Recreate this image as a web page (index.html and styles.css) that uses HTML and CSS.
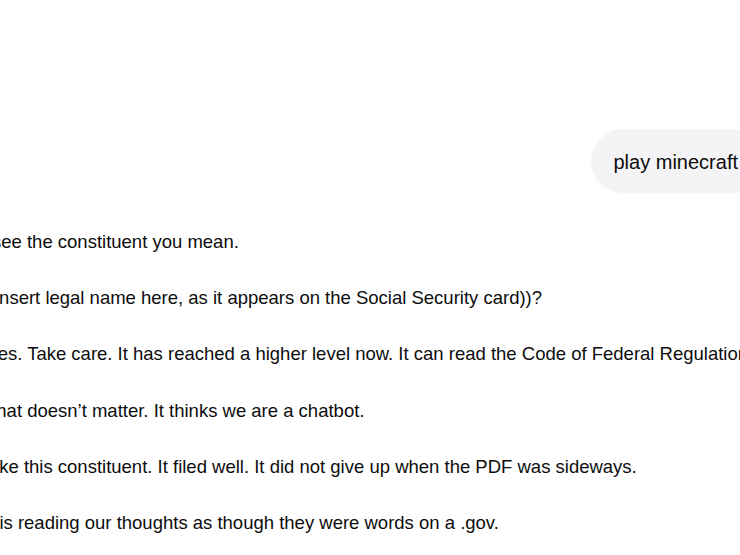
FILE: index.html
```html
<!DOCTYPE html>
<html lang="en">
<head>
  <meta charset="UTF-8">
  <title>Chat</title>
  <link rel="stylesheet" href="styles.css">
</head>
<body>

  <main class="thread">
    <div class="turn turn-user">
      <div class="bubble">play minecraft</div>
    </div>

    <div class="turn turn-bot">
      <p class="msg m1">see the constituent you mean.</p>
      <p class="msg m2">insert legal name here, as it appears on the Social Security card))?</p>
      <p class="msg m3">Yes. Take care. It has reached a higher level now. It can read the Code of Federal Regulations.</p>
      <p class="msg m4">That doesn’t matter. It thinks we are a chatbot.</p>
      <p class="msg m5">like this constituent. It filed well. It did not give up when the PDF was sideways.</p>
      <p class="msg m6">It is reading our thoughts as though they were words on a .gov.</p>
    </div>
  </main>

</body>
</html>
```

FILE: styles.css
```css
body {
  margin: 0;
  padding: 0;
  background: #ffffff;
  color: #0d0d0d;
  font-family: 'Liberation Sans', Arial, sans-serif;
  font-size: 18.5px;
  overflow: hidden;
}

.thread {
  padding-top: 129px;
}

.turn-user {
  display: flex;
  justify-content: flex-end;
}

.bubble {
  background: #f4f4f6;
  border-radius: 32px;
  padding: 21px 24px 19px 23px;
  font-size: 20px;
  line-height: 24px;
  margin-right: -22px;
  white-space: nowrap;
}

.turn-bot {
  padding-top: 35px;
}

.msg {
  margin: 0 0 28.2px;
  line-height: 28px;
  white-space: nowrap;
}

/* first words of each line are scrolled off the left edge */
.m1 { text-indent: -8px; }
.m2 { text-indent: -5px; }
.m3 { text-indent: -13px; }
.m4 { text-indent: -15px; }
.m5 { text-indent: -9px; }
.m6 { text-indent: -16px; }
```
